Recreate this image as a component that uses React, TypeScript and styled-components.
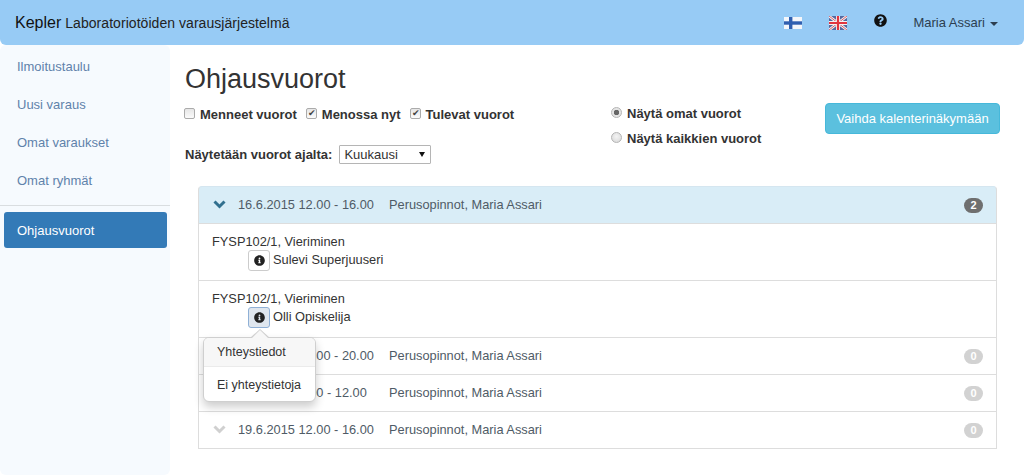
import React from 'react';
import styled, { createGlobalStyle } from 'styled-components';
import { FaInfoCircle, FaQuestionCircle } from 'react-icons/fa';

const GlobalStyle = createGlobalStyle`
  html, body {
    margin: 0;
    padding: 0;
    height: 475px;
    overflow: hidden;
    background: #fff;
    color: #333;
    font-family: "Liberation Sans", Arial, sans-serif;
    font-size: 13px;
  }
  * { box-sizing: border-box; }
`;

const Navbar = styled.header`
  height: 45px;
  background: #97cbf5;
  border-radius: 0 0 6px 6px;
  display: flex;
  align-items: center;
  padding: 0 26px 0 15px;
`;

const Brand = styled.div`
  display: flex;
  align-items: baseline;
  gap: 4px;
  color: #222;
  font-size: 14px;
  letter-spacing: 0.05px;
  b {
    font-weight: 400;
    font-size: 16px;
    letter-spacing: 0;
    color: #111;
  }
`;

const NavRight = styled.nav`
  margin-left: auto;
  display: flex;
  align-items: center;
`;

const FlagSlot = styled.span`
  display: flex;
  width: 18px;
  margin: 1px 27px 0 0;
`;

const HelpIcon = styled(FaQuestionCircle)`
  font-size: 13px;
  color: #111;
  margin: -4px 26px 0 0;
`;

const UserMenu = styled.span`
  color: #2c3e50;
  display: flex;
  align-items: center;
  gap: 5px;
`;

const Caret = styled.i`
  width: 0;
  height: 0;
  border-top: 4px solid #2c3e50;
  border-left: 4px solid transparent;
  border-right: 4px solid transparent;
  margin-top: 2px;
`;

const Page = styled.div`
  display: flex;
  align-items: flex-start;
`;

const Sidebar = styled.aside`
  width: 170px;
  height: 430px;
  flex: none;
  background: #f6fafe;
  border-radius: 6px;
  padding: 3px 3px 0 4px;
`;

const SideLink = styled.a<{ $active?: boolean }>`
  display: block;
  height: ${(p) => (p.$active ? '36px' : '38px')};
  line-height: ${(p) => (p.$active ? '37px' : '38px')};
  padding-left: 13px;
  border-radius: 3px;
  color: ${(p) => (p.$active ? '#fff' : '#5f82ab')};
  background: ${(p) => (p.$active ? '#337ab7' : 'transparent')};
`;

const SideDivider = styled.hr`
  border: 0;
  border-top: 1px solid #d9dde0;
  margin: 5px -3px 6px -4px;
`;

const Main = styled.main`
  flex: 1;
  padding: 0 24px 0 15px;
`;

const Title = styled.h1`
  font-weight: 400;
  font-size: 27px;
  line-height: 30px;
  color: #333;
  margin: 19px 0 0;
`;

const Filters = styled.div`
  display: grid;
  grid-template-columns: 426px 214px 175px;
  margin-top: 13px;
  height: 79px;
`;

const LeftFilters = styled.div`
  display: flex;
  flex-direction: column;
  gap: 23px;
`;

const CheckRow = styled.div`
  display: flex;
  gap: 9px;
  margin-left: -1px;
`;

const BoldLabel = styled.label`
  display: inline-flex;
  align-items: center;
  font-weight: 700;
  color: #333;
  height: 15px;
`;

const CheckBox = styled.input.attrs({ type: 'checkbox' })`
  appearance: none;
  width: 11px;
  height: 11px;
  margin: 0 5px 2px 0;
  border: 1px solid #ababab;
  border-radius: 2px;
  background: linear-gradient(#e6e6e6, #fbfbfb);
  position: relative;
  &:checked::after {
    content: '✔';
    position: absolute;
    left: 1px;
    top: -2px;
    font-size: 9px;
    line-height: 12px;
    color: #444;
  }
`;

const RadioDot = styled.input.attrs({ type: 'radio' })`
  appearance: none;
  width: 11px;
  height: 11px;
  margin: 0 5px 3px 0;
  border: 1px solid #b4b4b4;
  border-radius: 50%;
  background: radial-gradient(circle at 50% 40%, #f4f4f4, #d6d6d6);
  &:checked {
    background: radial-gradient(circle, #666 0 2.5px, #e4e4e4 3px);
  }
`;

const PeriodRow = styled.div`
  display: flex;
  align-items: center;
  gap: 7px;
`;

const SelectWrap = styled.span`
  position: relative;
  display: inline-flex;
  &::after {
    content: '';
    position: absolute;
    right: 6px;
    top: 7px;
    border-top: 5px solid #111;
    border-left: 3px solid transparent;
    border-right: 3px solid transparent;
    pointer-events: none;
  }
`;

const PeriodSelect = styled.select`
  appearance: none;
  width: 92px;
  height: 19px;
  padding: 0 4px;
  font: inherit;
  color: #333;
  background: #fff;
  border: 1px solid #b5b5b5;
  border-radius: 1px;
`;

const RadioColumn = styled.div`
  display: flex;
  flex-direction: column;
  gap: 10px;
  margin-top: -1px;
`;

const SwitchButton = styled.button`
  align-self: start;
  height: 31px;
  margin-top: -4px;
  background: #5bc0de;
  color: #fff;
  border: 1px solid #46b8da;
  border-radius: 4px;
  font: inherit;
  padding: 0;
`;

const ShiftList = styled.section`
  position: relative;
  margin-left: 13px;
  width: 799px;
  font-size: 12.8px;
`;

const ShiftHead = styled.div<{ $open?: boolean }>`
  height: ${(p) => (p.$open ? '38px' : '37px')};
  display: flex;
  align-items: center;
  padding: 0 13px 2px 14px;
  color: #4f5b66;
  background: ${(p) => (p.$open ? '#d9edf7' : '#fff')};
  border: 1px solid #dddddd;
  border-top: ${(p) => (p.$open ? '1px solid #d5e6f0' : '0')};
  border-radius: ${(p) => (p.$open ? '4px 4px 0 0' : '0')};
`;

const ChevronIcon = styled.svg<{ $open?: boolean }>`
  width: 13px;
  height: 9px;
  margin-right: 12px;
  flex: none;
  color: ${(p) => (p.$open ? '#31708f' : '#d0d0d0')};
`;

const ShiftDate = styled.span`
  width: 151px;
`;

const CountBadge = styled.span<{ $filled?: boolean }>`
  margin: 2px 0 0 auto;
  width: 19px;
  height: 15px;
  border-radius: 8px;
  background: ${(p) => (p.$filled ? '#6f6f6f' : '#d2d2d2')};
  color: #fff;
  font-size: 11px;
  font-weight: 700;
  line-height: 15px;
  text-align: center;
`;

const ShiftBody = styled.div`
  height: 57px;
  padding: 9px 13px 0;
  border: 1px solid #dddddd;
  border-top: 0;
  line-height: 18px;
  color: #333;
`;

const StudentRow = styled.div`
  display: flex;
  align-items: center;
  gap: 3px;
  height: 18px;
  margin-left: 36px;
`;

const InfoButton = styled.button<{ $active?: boolean }>`
  width: 22px;
  height: 21px;
  margin-top: 1px;
  flex: none;
  padding: 0;
  display: flex;
  align-items: center;
  justify-content: center;
  color: #222;
  font-size: 11px;
  background: ${(p) => (p.$active ? '#dfe6ee' : '#fff')};
  border: 1px solid ${(p) => (p.$active ? '#8fb0d6' : '#cccccc')};
  border-radius: 3px;
`;

const Popover = styled.div`
  position: absolute;
  left: 5px;
  top: 151px;
  width: 113px;
  height: 65px;
  background: #fff;
  border: 1px solid #cfcfcf;
  border-radius: 6px;
  box-shadow: 0 5px 10px rgba(0, 0, 0, 0.2);
  font-size: 12.5px;
  &::before {
    content: '';
    position: absolute;
    left: 46px;
    top: -9px;
    width: 0;
    height: 0;
    border-bottom: 9px solid #cfcfcf;
    border-left: 10px solid transparent;
    border-right: 10px solid transparent;
  }
  &::after {
    content: '';
    position: absolute;
    left: 47px;
    top: -8px;
    width: 0;
    height: 0;
    border-bottom: 9px solid #f7f7f7;
    border-left: 9px solid transparent;
    border-right: 9px solid transparent;
  }
`;

const PopoverTitle = styled.div`
  height: 29px;
  line-height: 28px;
  padding-left: 13px;
  background: #f7f7f7;
  border-bottom: 1px solid #ebebeb;
  border-radius: 5px 5px 0 0;
`;

const PopoverBody = styled.div`
  padding: 11px 0 0 13px;
`;

const Chevron = ({ open }: { open?: boolean }) => (
  <ChevronIcon $open={open} viewBox="0 0 13 9">
    <path d="M1.5 1.5 6.5 6.5 11.5 1.5" fill="none" stroke="currentColor" strokeWidth="3" />
  </ChevronIcon>
);

const FlagFi = () => (
  <svg width="18" height="14" viewBox="0 0 18 14">
    <rect y="1" width="18" height="12" fill="#f4f6fa" />
    <rect x="5" y="1" width="3.4" height="12" fill="#2f5fb0" />
    <rect y="5.3" width="18" height="3.4" fill="#2f5fb0" />
  </svg>
);

const FlagUk = () => (
  <svg width="18" height="14" viewBox="0 0 18 14">
    <rect width="18" height="14" fill="#56689f" />
    <path d="M0 0 18 14M18 0 0 14" stroke="#f2f2f2" strokeWidth="2.6" />
    <path d="M0 0 18 14M18 0 0 14" stroke="#d9505f" strokeWidth="0.9" />
    <path d="M9 0V14M0 7H18" stroke="#f2f2f2" strokeWidth="4" />
    <path d="M9 0V14M0 7H18" stroke="#e2343f" strokeWidth="2.2" />
  </svg>
);

const closedShifts = [
  { date: '17.6.2015 16.00 - 20.00', who: 'Perusopinnot, Maria Assari' },
  { date: '18.6.2015 8.00 - 12.00', who: 'Perusopinnot, Maria Assari' },
  { date: '19.6.2015 12.00 - 16.00', who: 'Perusopinnot, Maria Assari' },
];

const students = [
  { course: 'FYSP102/1, Vieriminen', name: 'Sulevi Superjuuseri', active: false },
  { course: 'FYSP102/1, Vieriminen', name: 'Olli Opiskelija', active: true },
];

const App = () => {
  return (
    <>
      <GlobalStyle />
      <Navbar>
        <Brand>
          <b>Kepler</b> Laboratoriotöiden varausjärjestelmä
        </Brand>
        <NavRight>
          <FlagSlot><FlagFi /></FlagSlot>
          <FlagSlot><FlagUk /></FlagSlot>
          <HelpIcon />
          <UserMenu>
            Maria Assari <Caret />
          </UserMenu>
        </NavRight>
      </Navbar>
      <Page>
        <Sidebar>
          <SideLink>Ilmoitustaulu</SideLink>
          <SideLink>Uusi varaus</SideLink>
          <SideLink>Omat varaukset</SideLink>
          <SideLink>Omat ryhmät</SideLink>
          <SideDivider />
          <SideLink $active>Ohjausvuorot</SideLink>
        </Sidebar>
        <Main>
          <Title>Ohjausvuorot</Title>
          <Filters>
            <LeftFilters>
              <CheckRow>
                <BoldLabel><CheckBox readOnly />Menneet vuorot</BoldLabel>
                <BoldLabel><CheckBox readOnly checked />Menossa nyt</BoldLabel>
                <BoldLabel><CheckBox readOnly checked />Tulevat vuorot</BoldLabel>
              </CheckRow>
              <PeriodRow>
                <BoldLabel>Näytetään vuorot ajalta:</BoldLabel>
                <SelectWrap>
                  <PeriodSelect defaultValue="Kuukausi">
                    <option>Kuukausi</option>
                  </PeriodSelect>
                </SelectWrap>
              </PeriodRow>
            </LeftFilters>
            <RadioColumn>
              <BoldLabel><RadioDot readOnly checked name="who" />Näytä omat vuorot</BoldLabel>
              <BoldLabel><RadioDot readOnly name="who" />Näytä kaikkien vuorot</BoldLabel>
            </RadioColumn>
            <SwitchButton>Vaihda kalenterinäkymään</SwitchButton>
          </Filters>
          <ShiftList>
            <ShiftHead $open>
              <Chevron open />
              <ShiftDate>16.6.2015 12.00 - 16.00</ShiftDate>
              Perusopinnot, Maria Assari
              <CountBadge $filled>2</CountBadge>
            </ShiftHead>
            {students.map((s) => (
              <ShiftBody key={s.name}>
                {s.course}
                <StudentRow>
                  <InfoButton $active={s.active}><FaInfoCircle /></InfoButton>
                  {s.name}
                </StudentRow>
              </ShiftBody>
            ))}
            {closedShifts.map((c) => (
              <ShiftHead key={c.date}>
                <Chevron />
                <ShiftDate>{c.date}</ShiftDate>
                {c.who}
                <CountBadge>0</CountBadge>
              </ShiftHead>
            ))}
            <Popover>
              <PopoverTitle>Yhteystiedot</PopoverTitle>
              <PopoverBody>Ei yhteystietoja</PopoverBody>
            </Popover>
          </ShiftList>
        </Main>
      </Page>
    </>
  );
};

export default App;
